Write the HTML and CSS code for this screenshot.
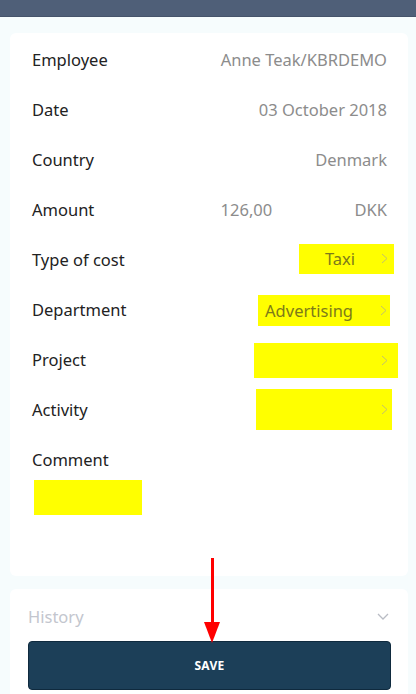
FILE: index.html
```html
<!DOCTYPE html>
<html lang="en">
<head>
<meta charset="utf-8">
<title>Expense</title>
<link rel="stylesheet" href="styles.css">
</head>
<body>
<div class="topbar"></div>
<main class="page">
  <section class="card">
    <div class="row"><span class="label">Employee</span><span class="value">Anne Teak/KBRDEMO</span></div>
    <div class="row"><span class="label">Date</span><span class="value">03 October 2018</span></div>
    <div class="row"><span class="label">Country</span><span class="value">Denmark</span></div>
    <div class="row"><span class="label">Amount</span><span class="amount">126,00</span><span class="value">DKK</span></div>
    <div class="row"><span class="label">Type of cost</span>
      <span class="pick pick-taxi"><span class="pick-text">Taxi</span><svg class="chev" viewBox="0 0 7 11"><path d="M1 1l5 4.5L1 10" /></svg></span></div>
    <div class="row"><span class="label">Department</span>
      <span class="pick pick-dept"><span class="pick-text">Advertising</span><svg class="chev" viewBox="0 0 7 11"><path d="M1 1l5 4.5L1 10" /></svg></span></div>
    <div class="row"><span class="label">Project</span>
      <span class="pick pick-proj"><svg class="chev" viewBox="0 0 7 11"><path d="M1 1l5 4.5L1 10" /></svg></span></div>
    <div class="row"><span class="label">Activity</span>
      <span class="pick pick-act"><svg class="chev" viewBox="0 0 7 11"><path d="M1 1l5 4.5L1 10" /></svg></span></div>
    <div class="comment">
      <div class="comment-label">Comment</div>
      <div class="comment-box"></div>
    </div>
  </section>
  <section class="history">
    <div class="history-head"><span>History</span><svg class="chev-down" viewBox="0 0 12 7"><path d="M1 1l5 5 5-5" /></svg></div>
    <button class="save">SAVE</button>
  </section>
  <div class="arrow" aria-hidden="true"><div class="arrow-line"></div><div class="arrow-head"></div></div>
</main>
</body>
</html>
```

FILE: styles.css
```css
* { box-sizing: border-box; }
html, body { margin: 0; padding: 0; }
body {
  width: 416px;
  height: 694px;
  overflow: hidden;
  background: #f6fcfd;
  font-family: "Noto Sans", "Open Sans", sans-serif;
  color: #222;
}
.topbar {
  height: 17px;
  background: #4f5f78;
  border-bottom: 1px solid #46546b;
}
.page {
  position: relative;
  padding: 16px 8px 0 10px;
}
.card {
  background: #fff;
  border-radius: 6px;
  padding: 1px 21px 61px 22px;
}
.row {
  display: flex;
  align-items: center;
  height: 50px;
  font-size: 16.5px;
}
.label { color: #222; }
.value { margin-left: auto; color: #8c8c8c; }
.amount { margin-left: auto; margin-right: auto; position: relative; left: 22px; color: #8c8c8c; }
.amount + .value { margin-left: 0; }
.pick {
  margin-left: auto;
  display: flex;
  align-items: center;
  justify-content: flex-end;
  background: #ffff00;
  color: #7d7a1a;
}
.chev { width: 7px; height: 11px; fill: none; stroke: #c4c26a; stroke-width: 1; }
.pick-taxi { width: 95px; height: 30px; margin-right: -7px; padding-right: 6px; margin-top: -1px; }
.pick-taxi .pick-text { margin-right: 26px; }
.pick-dept { width: 132px; height: 31px; margin-right: -3px; padding-right: 3px; margin-top: 2px; }
.pick-dept .pick-text { margin-right: 27px; }
.pick-proj { width: 144px; height: 35px; margin-right: -11px; padding-right: 10px; margin-top: 2px; }
.pick-act { width: 136px; height: 41px; margin-right: -5px; padding-right: 4px; margin-top: 0; }
.comment { padding-top: 16px; }
.comment-label { font-size: 16.5px; line-height: 20px; }
.comment-box {
  margin: 10px 0 0 2px;
  width: 108px;
  height: 35px;
  background: #ffff00;
}
.history {
  margin-top: 13px;
  background: #fff;
  border-radius: 6px 6px 0 0;
  padding: 1px 17px 4px 18px;
  height: 105px;
}
.history-head {
  display: flex;
  align-items: center;
  justify-content: space-between;
  height: 51px;
  padding: 2px 2px 0 0;
  color: #c3c6ce;
  font-size: 16.5px;
}
.chev-down { width: 12px; height: 7px; fill: none; stroke: #b9bcc4; stroke-width: 1.3; }
.save {
  display: block;
  width: 363px;
  height: 49px;
  margin: 0;
  background: #1c3f58;
  border: 1px solid #0f2a3e;
  border-radius: 4px;
  color: #fff;
  font-family: "Noto Sans", "Open Sans", sans-serif;
  font-weight: 700;
  font-size: 12px;
  letter-spacing: 0.3px;
}
.arrow {
  position: absolute;
  left: 202px;
  top: 541px;
  width: 20px;
  display: flex;
  flex-direction: column;
  align-items: center;
}
.arrow-line { width: 3px; height: 64px; background: #ff0000; }
.arrow-head {
  width: 0; height: 0;
  border-left: 8px solid transparent;
  border-right: 8px solid transparent;
  border-top: 21px solid #ff0000;
}
```
